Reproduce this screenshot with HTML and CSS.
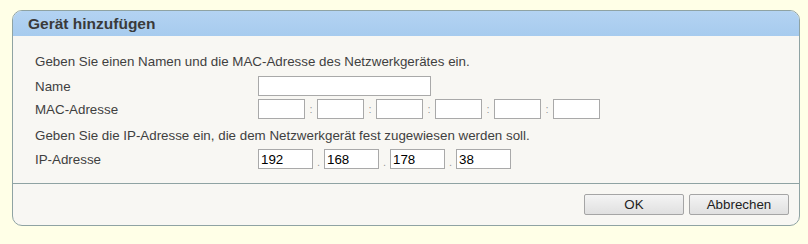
FILE: index.html
```html
<!DOCTYPE html>
<html lang="de">
<head>
    <meta charset="UTF-8">
    <title>Gerät hinzufügen</title>
    <link rel="stylesheet" href="styles.css">
</head>
<body>
    <div class="dialog">
        <div class="dialog-head">Gerät hinzufügen</div>
        <div class="dialog-body">
            <p class="hint">Geben Sie einen Namen und die MAC-Adresse des Netzwerkgerätes ein.</p>
            <div class="row row-name">
                <label>Name</label>
                <input type="text" class="name-input">
            </div>
            <div class="row row-mac">
                <label>MAC-Adresse</label>
                <div class="fields">
                    <input type="text" class="mac"><span class="sep">:</span>
                    <input type="text" class="mac"><span class="sep">:</span>
                    <input type="text" class="mac"><span class="sep">:</span>
                    <input type="text" class="mac"><span class="sep">:</span>
                    <input type="text" class="mac"><span class="sep">:</span>
                    <input type="text" class="mac">
                </div>
            </div>
            <p class="hint hint-ip">Geben Sie die IP-Adresse ein, die dem Netzwerkgerät fest zugewiesen werden soll.</p>
            <div class="row row-ip">
                <label>IP-Adresse</label>
                <div class="fields">
                    <input type="text" class="ip" value="192"><span class="dot">.</span>
                    <input type="text" class="ip" value="168"><span class="dot">.</span>
                    <input type="text" class="ip" value="178"><span class="dot">.</span>
                    <input type="text" class="ip" value="38">
                </div>
            </div>
        </div>
        <div class="dialog-foot">
            <button class="btn">OK</button>
            <button class="btn">Abbrechen</button>
        </div>
    </div>
</body>
</html>
```

FILE: styles.css
```css
body {
    margin: 0;
    padding: 10px 9px 0 12px;
    background-color: #ffffe7;
    font-family: "Liberation Sans", Arial, sans-serif;
    font-size: 13.35px;
    color: #3f3f3f;
}
.dialog {
    width: 786px;
    border: 1px solid #8fa3a3;
    border-radius: 10px;
    background: #f8f7f3;
    overflow: hidden;
}
.dialog-head {
    height: 25px;
    line-height: 26px;
    padding-left: 15px;
    background: linear-gradient(#b3d3f2, #a7cbee);
    font-size: 15.5px;
    font-weight: bold;
    color: #3a3a3a;
}
.dialog-body {
    padding: 16px 0 14px 22px;
    border-bottom: 1px solid #8fa3a3;
}
.hint {
    margin: 0;
    height: 20px;
    line-height: 20px;
}
.hint-ip {
    padding-top: 4px;
}
.row {
    display: flex;
    align-items: center;
    height: 20px;
}
.row label {
    width: 223px;
    padding-top: 1px;
}
.row-name {
    margin-top: 4px;
}
.row-mac {
    margin-top: 3px;
    margin-bottom: 3px;
}
.row-ip {
    margin-top: 3px;
}
.fields {
    display: flex;
    align-items: center;
}
input {
    box-sizing: border-box;
    height: 20px;
    margin: 0;
    padding: 1px 2px;
    border: 1px solid #a9a9a9;
    background: #fff;
    font-family: "Liberation Sans", Arial, sans-serif;
    font-size: 13.35px;
    color: #000;
}
.name-input {
    width: 173px;
}
.mac {
    width: 47px;
}
.ip {
    width: 55px;
}
.sep, .dot {
    color: #999;
    text-align: center;
    font-size: 11px;
}
.sep {
    width: 12px;
}
.dot {
    width: 11px;
    padding-top: 6px;
}
.dialog-foot {
    display: flex;
    justify-content: flex-end;
    gap: 5px;
    padding: 10px 10px 10px 0;
    height: 21px;
}
.btn {
    width: 100px;
    height: 21px;
    padding: 0;
    border: 1px solid #a5a5a5;
    border-radius: 2px;
    background: linear-gradient(#f4f4f4, #e0e0e0);
    font-family: "Liberation Sans", Arial, sans-serif;
    font-size: 13.35px;
    color: #222;
}
```
